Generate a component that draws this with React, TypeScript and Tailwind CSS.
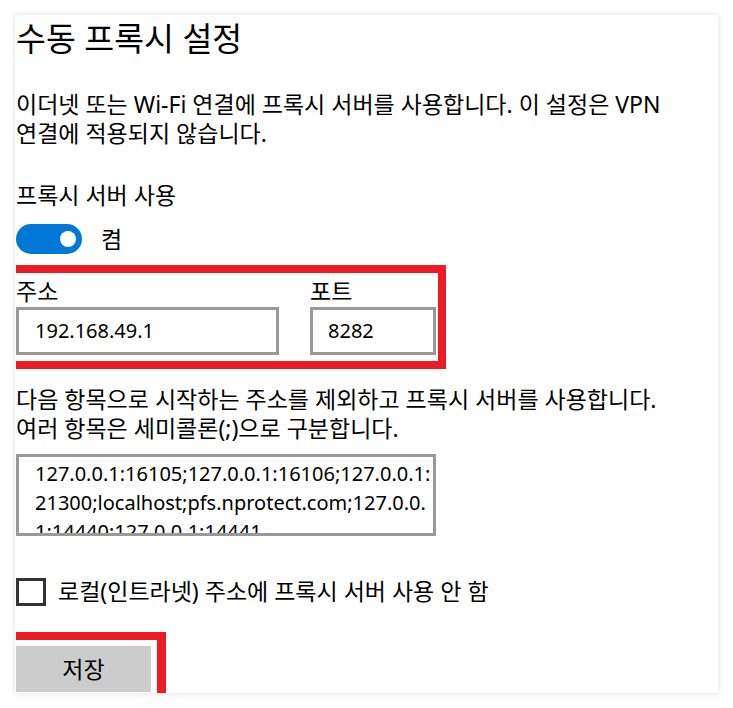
import React from 'react';

const font = { fontFamily: '"Noto Sans", "Noto Sans CJK KR", sans-serif' };

const App = () => {
  return (
    <div className="w-[733px] h-[708px] overflow-hidden bg-white pt-[15px] pl-[15px]" style={font}>
      <div className="w-[703px] h-[678px] bg-white overflow-hidden pl-px shadow-[0_0_6px_rgba(0,0,0,0.14)] text-black">
        {/* Title */}
        <h1 className="mt-[4px] text-[32.5px] leading-[40px] whitespace-nowrap">수동 프록시 설정</h1>

        {/* Description */}
        <p className="mt-[31px] text-[23px] leading-[29px] whitespace-nowrap">
          이더넷 또는 Wi-Fi 연결에 프록시 서버를 사용합니다. 이 설정은 VPN
          <br />
          연결에 적용되지 않습니다.
        </p>

        <p className="mt-[33px] text-[23px] leading-[29px]">프록시 서버 사용</p>

        {/* Toggle */}
        <div className="mt-[14px] flex items-center gap-[19px]">
          <div className="w-[66px] h-[30px] rounded-full bg-[#0078d7] flex items-center justify-end pr-[6px]">
            <div className="w-[16px] h-[16px] rounded-full bg-white" />
          </div>
          <span className="text-[23px] leading-[29px]">켬</span>
        </div>

        {/* Address / port (highlighted) */}
        <div className="mt-[11px] w-[430px] border-t-[8px] border-r-[8px] border-b-[8px] border-[#ed1c24] pt-[4px] pb-[6px] flex gap-[31px]">
          <div className="flex flex-col">
            <span className="text-[23px] leading-[29px]">주소</span>
            <div className="mt-px w-[263px] h-[48px] border-[3px] border-[#999] flex items-center pl-[16px] text-[20px]">
              192.168.49.1
            </div>
          </div>
          <div className="flex flex-col">
            <span className="text-[23px] leading-[29px]">포트</span>
            <div className="mt-px w-[126px] h-[48px] border-[3px] border-[#999] flex items-center pl-[15px] text-[20px]">
              8282
            </div>
          </div>
        </div>

        {/* Exceptions */}
        <p className="mt-[16px] text-[23px] leading-[29px] whitespace-nowrap">
          다음 항목으로 시작하는 주소를 제외하고 프록시 서버를 사용합니다.
          <br />
          여러 항목은 세미콜론(;)으로 구분합니다.
        </p>

        <div className="mt-[11px] w-[420px] h-[82px] border-[3px] border-[#999] overflow-hidden pl-[16px] pt-[2px] text-[20px] leading-[29px] whitespace-nowrap">
          <div>127.0.0.1:16105;127.0.0.1:16106;127.0.0.1:</div>
          <div>21300;localhost;pfs.nprotect.com;127.0.0.</div>
          <div>1:14440;127.0.0.1:14441</div>
        </div>

        {/* Local bypass */}
        <label className="mt-[41px] flex items-center gap-[12px]">
          <span className="w-[30px] h-[28px] border-[3px] border-[#333] bg-white" />
          <span className="text-[23px] leading-[29px]">로컬(인트라넷) 주소에 프록시 서버 사용 안 함</span>
        </label>

        {/* Save (highlighted) */}
        <div className="mt-[26px] w-[150px] border-t-[8px] border-r-[9px] border-[#ed1c24] pt-[6px] pb-[6px]">
          <button className="w-[135px] h-[46px] bg-[#cccccc] text-[23px] leading-[29px] text-black">
            저장
          </button>
        </div>
      </div>
    </div>
  );
};

export default App;
